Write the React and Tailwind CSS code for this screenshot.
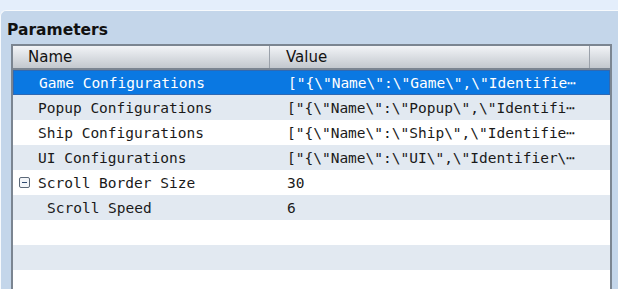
import React from "react";

const rows = [
  { name: "Game Configurations", value: '["{\\"Name\\":\\"Game\\",\\"Identifie', indent: "pl-[25px]", selected: true },
  { name: "Popup Configurations", value: '["{\\"Name\\":\\"Popup\\",\\"Identifi', indent: "pl-[25px]", alt: true },
  { name: "Ship Configurations", value: '["{\\"Name\\":\\"Ship\\",\\"Identifie', indent: "pl-[25px]" },
  { name: "UI Configurations", value: '["{\\"Name\\":\\"UI\\",\\"Identifier\\', indent: "pl-[25px]", alt: true },
  { name: "Scroll Border Size", value: "30", indent: "pl-[25px]", toggle: true },
  { name: "Scroll Speed", value: "6", indent: "pl-[34px]", alt: true },
  { name: "", value: "" },
  { name: "", value: "", alt: true },
  { name: "", value: "" },
];

function Row({ r }) {
  const isLong = r.value.length > 5;
  const bg = r.selected
    ? "bg-[#0a78e2] text-white border border-[#2f69b3]"
    : r.alt
    ? "bg-[#e2e9f1] text-[#1a1a1a]"
    : "bg-white text-[#1a1a1a]";
  return (
    <div
      className={`relative flex h-[25px] shrink-0 items-center pt-[2px] font-['DejaVu_Sans_Mono',monospace] text-[14.5px] leading-none ${bg}`}
    >
      {r.toggle && (
        <span className="absolute left-[6px] top-[7px] flex h-[11px] w-[11px] items-center justify-center rounded-[2px] border border-[#5b6878] bg-[#f4f6f9]">
          <span className="h-[1px] w-[5px] bg-[#2f4a70]" />
        </span>
      )}
      <div className={`w-[274px] shrink-0 whitespace-pre ${r.indent || ""}`}>{r.name}</div>
      <div className="whitespace-pre">
        {r.value}
        {isLong ? "⋯" : ""}
      </div>
    </div>
  );
}

export default function App() {
  return (
    <div className="h-[289px] w-[618px] overflow-hidden bg-[#e4eefb] pt-[10px]">
      <div className="flex h-[279px] flex-col rounded-tl-[6px] border-l border-t border-[#f7fafd] bg-[#c4d6ea]">
        <div className="flex h-[33px] shrink-0 items-end pl-[6px] pb-[6px] font-['DejaVu_Sans',sans-serif] text-[15.5px] font-bold leading-none text-[#111]">
          Parameters
        </div>
        <div className="ml-[10px] mr-[6px] flex flex-1 flex-col overflow-hidden border-x-2 border-t-2 border-[#7b8591] bg-white">
          <div className="flex h-[24px] shrink-0 border-b-2 border-[#7b8591] bg-gradient-to-b from-[#f2f4f7] to-[#c3c8ce] font-['DejaVu_Sans',sans-serif] text-[15px] leading-none text-[#111]">
            <div className="flex w-[257px] shrink-0 items-center border-r border-[#9aa1aa] pl-[15px] pt-[1px]">Name</div>
            <div className="flex flex-1 items-center border-r border-[#9aa1aa] pl-[16px] pt-[1px]">Value</div>
            <div className="w-[20px] shrink-0" />
          </div>
          {rows.map((r, i) => (
            <Row key={i} r={r} />
          ))}
        </div>
      </div>
    </div>
  );
}
